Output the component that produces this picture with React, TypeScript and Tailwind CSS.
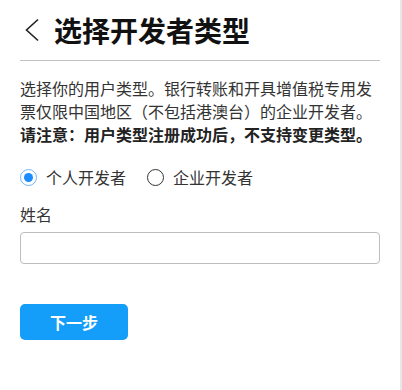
import { useState } from "react";

const font = "font-['Microsoft_YaHei','Noto_Sans_CJK_SC',sans-serif]";

export default function App() {
	const [kind, setKind] = useState<"personal" | "company">("personal");
	const [name, setName] = useState("");

	return (
		<div className={`min-h-[390px] w-[402px] bg-white ${font}`}>
			<div className="min-h-[390px] w-[402px] border-r-2 border-[#e8e8e8] px-5">
				<div className="flex h-[61px] items-center border-b border-[#c2c2c2]">
					<button type="button" aria-label="返回" className="ml-1 mr-[14px] flex items-center">
						<svg width="16" height="24" viewBox="0 0 16 24" fill="none">
							<polyline points="14,1.5 2.5,12 14,22.5" stroke="#222" strokeWidth="1.6" />
						</svg>
					</button>
					<h1 className="text-[28px] font-bold leading-[36px] text-[#111]">选择开发者类型</h1>
				</div>

				<p className="mt-4 text-[16px] leading-[23px] text-[#333]">
					选择你的用户类型。银行转账和开具增值税专用发票仅限中国地区（不包括港澳台）的企业开发者。
					<span className="font-bold text-[#222]">请注意：用户类型注册成功后，不支持变更类型。</span>
				</p>

				<div className="mt-[19px] flex h-6 items-center text-[16px] text-[#333]">
					<Radio checked={kind === "personal"} onClick={() => setKind("personal")} label="个人开发者" />
					<div className="w-[21px]" />
					<Radio checked={kind === "company"} onClick={() => setKind("company")} label="企业开发者" />
				</div>

				<label htmlFor="name" className="mt-[13px] block text-[16px] leading-6 text-[#333]">
					姓名
				</label>
				<input
					id="name"
					value={name}
					onChange={(e) => setName(e.target.value)}
					className="mt-[6px] block h-8 w-full rounded-[4px] border border-[#bdbdbd] px-2 text-[16px] outline-none"
				/>

				<button
					type="button"
					className="mt-10 flex h-9 w-[108px] items-center justify-center rounded-[5px] bg-[#149efa] text-[16px] font-bold text-white"
				>
					下一步
				</button>
			</div>
		</div>
	);
}

function Radio({ checked, onClick, label }: { checked: boolean; onClick: () => void; label: string }) {
	return (
		<button type="button" onClick={onClick} className="flex items-center">
			<span
				className={`flex size-[17px] items-center justify-center rounded-full border ${
					checked ? "border-[#6fb5ff]" : "border-[#333]"
				}`}
			>
				{checked && <span className="size-[9px] rounded-full bg-[#1a8cff]" />}
			</span>
			<span className="ml-[9px] leading-6">{label}</span>
		</button>
	);
}
